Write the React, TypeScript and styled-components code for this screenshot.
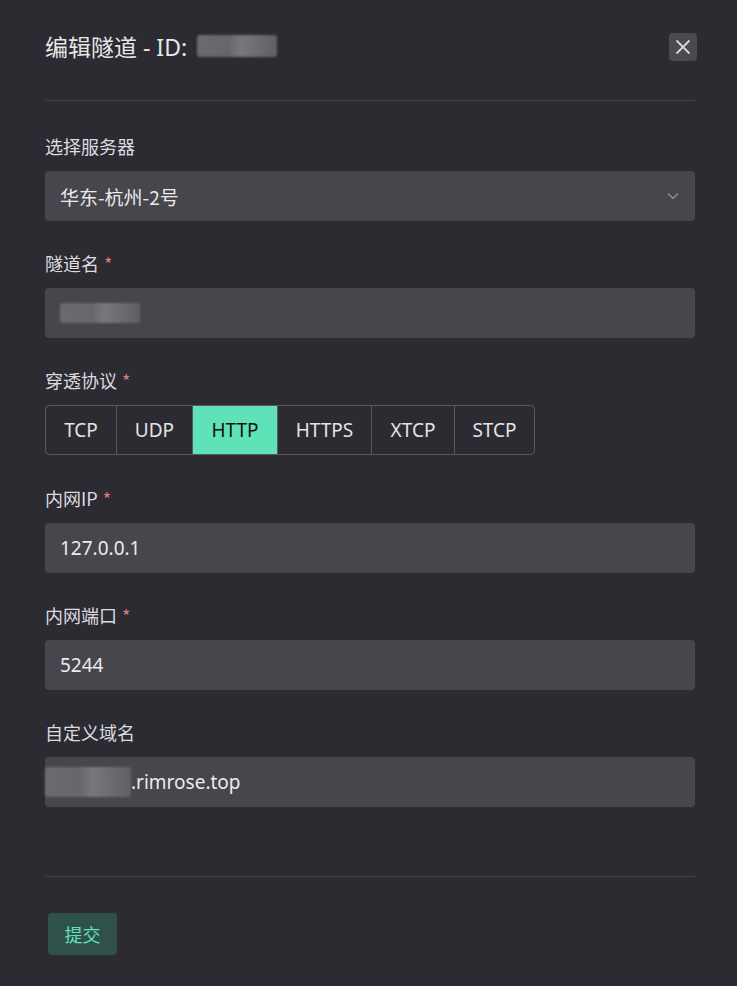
import React from "react";
import styled, { createGlobalStyle } from "styled-components";

const Global = createGlobalStyle`
  html, body { margin: 0; padding: 0; background: #2c2b31; }
  body { font-family: "Noto Sans", "Noto Sans CJK SC", sans-serif; color: #e3e3e6; }
  * { box-sizing: border-box; }
`;

const Page = styled.div`
  width: 737px;
  min-height: 986px;
  background: #2c2b31;
  padding: 0 42px 0 45px;
`;

const Header = styled.div`
  display: flex;
  align-items: center;
  justify-content: space-between;
  height: 101px;
  border-bottom: 1px solid #45444a;
`;

const Title = styled.h1`
  margin: 0;
  font-size: 23px;
  font-weight: 400;
  color: #e6e6e8;
  display: flex;
  align-items: center;
  gap: 10px;
  font-family: "Noto Sans", "Noto Sans CJK SC", sans-serif;
  padding-bottom: 8px;
`;

const Redact = styled.span<{ $w: number; $h: number }>`
  display: inline-block;
  flex: none;
  width: ${(p) => p.$w}px;
  height: ${(p) => p.$h}px;
  border-radius: 3px;
  background: linear-gradient(90deg, #6a6a70 0%, #66666c 40%, #77777d 55%, #5f5f65 100%);
  filter: blur(1px);
`;

const CloseBtn = styled.button`
  width: 28px;
  height: 28px;
  border: none;
  border-radius: 4px;
  background: #4a4a50;
  display: flex;
  align-items: center;
  justify-content: center;
  padding: 0;
  margin-right: -2px;
  margin-bottom: 6px;
`;

const Form = styled.div`
  padding-top: 34px;
  display: flex;
  flex-direction: column;
  gap: 31.2px;
  padding-bottom: 69px;
  border-bottom: 1px solid #45444a;
`;

const Field = styled.div`
  display: flex;
  flex-direction: column;
  gap: 12px;
`;

const Label = styled.div`
  font-size: 18px;
  line-height: 22px;
  margin-bottom: 2px;
  color: #dcdce0;
  font-family: "Noto Sans CJK SC", sans-serif;
`;

const Star = styled.span`
  color: #e07b7b;
  margin-left: 5px;
`;

const Input = styled.div<{ $flush?: boolean }>`
  height: 50px;
  background: #47464c;
  border-radius: 4px;
  display: flex;
  align-items: center;
  padding: 0 15px;
  padding-left: ${(p) => (p.$flush ? "0" : "15px")};
  font-size: 19px;
  color: #ebebed;
`;

const SelectInput = styled(Input)`
  justify-content: space-between;
  font-family: "Noto Sans CJK SC", sans-serif;
  padding-right: 16px;
`;

const Segments = styled.div`
  display: flex;
  align-self: flex-start;
  border: 1px solid #5a595f;
  border-radius: 4px;
  height: 50px;
  overflow: hidden;
`;

const Segment = styled.div<{ $active?: boolean; $w: number }>`
  width: ${(p) => p.$w}px;
  display: flex;
  align-items: center;
  justify-content: center;
  font-size: 19px;
  color: ${(p) => (p.$active ? "#111" : "#e3e3e6")};
  background: ${(p) => (p.$active ? "#5fe2b7" : "transparent")};
  border-left: 1px solid #5a595f;
  &:first-child { border-left: none; }
`;

const Footer = styled.div`
  padding: 36px 0 0 3px;
`;

const Submit = styled.button`
  width: 69px;
  height: 42px;
  border: none;
  border-radius: 4px;
  background: #30504b;
  color: #5fe2b7;
  font-size: 18px;
  font-family: "Noto Sans CJK SC", sans-serif;
`;

const protocols: [string, number][] = [
  ["TCP", 70],
  ["UDP", 76],
  ["HTTP", 85],
  ["HTTPS", 94],
  ["XTCP", 83],
  ["STCP", 80],
];

export default function App() {
  return (
    <Page>
      <Global />
      <Header>
        <Title>
          <span>编辑隧道 - ID:</span>
          <Redact $w={80} $h={22} />
        </Title>
        <CloseBtn aria-label="close">
          <svg width="16" height="16" viewBox="0 0 16 16">
            <path d="M2 2 L14 14 M14 2 L2 14" stroke="#d6d6da" strokeWidth="1.8" strokeLinecap="round" />
          </svg>
        </CloseBtn>
      </Header>
      <Form>
        <Field>
          <Label>选择服务器</Label>
          <SelectInput>
            <span>华东-杭州-2号</span>
            <svg width="12" height="8" viewBox="0 0 12 8">
              <path d="M1 1.5 L6 6.5 L11 1.5" stroke="#9a9aa0" strokeWidth="1.1" fill="none" />
            </svg>
          </SelectInput>
        </Field>
        <Field>
          <Label>
            隧道名<Star>*</Star>
          </Label>
          <Input>
            <Redact $w={80} $h={20} />
          </Input>
        </Field>
        <Field>
          <Label>
            穿透协议<Star>*</Star>
          </Label>
          <Segments>
            {protocols.map(([p, w]) => (
              <Segment key={p} $w={w} $active={p === "HTTP"}>
                {p}
              </Segment>
            ))}
          </Segments>
        </Field>
        <Field>
          <Label>
            内网IP<Star>*</Star>
          </Label>
          <Input>127.0.0.1</Input>
        </Field>
        <Field>
          <Label>
            内网端口<Star>*</Star>
          </Label>
          <Input>5244</Input>
        </Field>
        <Field>
          <Label>自定义域名</Label>
          <Input $flush>
            <Redact $w={86} $h={30} />
            <span>.rimrose.top</span>
          </Input>
        </Field>
      </Form>
      <Footer>
        <Submit>提交</Submit>
      </Footer>
    </Page>
  );
}
